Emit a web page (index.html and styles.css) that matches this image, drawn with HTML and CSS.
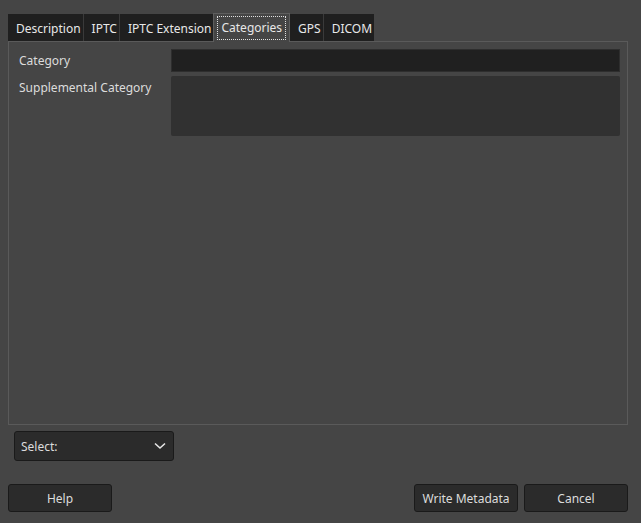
FILE: index.html
```html
<!DOCTYPE html>
<html lang="en">
<head>
    <meta charset="UTF-8">
    <title>Metadata Editor</title>
    <link rel="stylesheet" href="styles.css">
</head>
<body>
    <div class="dialog">
        <div class="tabs">
            <div class="tab">Description</div>
            <div class="tab">IPTC</div>
            <div class="tab">IPTC Extension</div>
            <div class="tab active"><span class="focus">Categories</span></div>
            <div class="tab">GPS</div>
            <div class="tab">DICOM</div>
        </div>

        <div class="panel">
            <div class="row">
                <label class="field-label">Category</label>
                <div class="entry"></div>
            </div>
            <div class="row">
                <label class="field-label">Supplemental Category</label>
                <div class="textarea"></div>
            </div>
        </div>

        <div class="combo">
            <span>Select:</span>
            <svg width="12" height="8" viewBox="0 0 12 8">
                <path d="M1 1.5 L6 6 L11 1.5" fill="none" stroke="#e6e6e6" stroke-width="1.6"/>
            </svg>
        </div>

        <div class="buttons">
            <button class="btn">Help</button>
            <div class="btn-group">
                <button class="btn">Write Metadata</button>
                <button class="btn">Cancel</button>
            </div>
        </div>
    </div>
</body>
</html>
```

FILE: styles.css
```css
body {
    margin: 0;
    background-color: #454545;
    font-family: "Noto Sans", sans-serif;
    font-size: 12px;
    color: #dcdcdc;
}
.dialog {
    padding: 13px 13px 10px 8px;
}
.tabs {
    display: flex;
    align-items: flex-end;
    height: 28px;
}
.tab {
    height: 27px;
    box-sizing: border-box;
    padding: 1px 2px 0 8px;
    background-color: #1f1f1f;
    border-left: 1px solid #3a3a3a;
    line-height: 27px;
    color: #e8e8e8;
}
.tab:first-child {
    border-left: none;
}
.tab.active {
    height: 29px;
    margin-bottom: -1px;
    padding: 2px 3px 2px 3px;
    background-color: #454545;
    border: 1px solid #5e5e5e;
    border-bottom: none;
    line-height: 22px;
    position: relative;
    z-index: 1;
}
.tab.active + .tab {
    border-left: none;
}
.focus {
    display: block;
    padding: 0 3px;
    border: 1px dotted #e0e0e0;
}
.panel {
    height: 375px;
    border: 1px solid #5a5a5a;
    padding: 7px 7px 0 10px;
}
.row {
    display: flex;
    margin-bottom: 4px;
}
.field-label {
    width: 152px;
    flex-shrink: 0;
    padding-top: 3px;
}
.entry {
    flex: 1;
    height: 21px;
    background-color: #202020;
    border: 1px solid #2e2e2e;
}
.textarea {
    flex: 1;
    height: 60px;
    background-color: #313131;
    border-radius: 2px;
}
.combo {
    display: flex;
    align-items: center;
    justify-content: space-between;
    width: 160px;
    height: 30px;
    box-sizing: border-box;
    margin: 6px 0 0 6px;
    padding: 0 7px 0 6px;
    background-color: #2b2b2b;
    border: 1px solid #1a1a1a;
    border-radius: 3px;
}
.buttons {
    display: flex;
    justify-content: space-between;
    margin-top: 23px;
}
.btn-group {
    display: flex;
    gap: 6px;
}
.btn {
    width: 104px;
    height: 28px;
    background-color: #2b2b2b;
    border: 1px solid #1a1a1a;
    border-radius: 3px;
    color: #dcdcdc;
    font-family: "Noto Sans", sans-serif;
    font-size: 12px;
}
```
